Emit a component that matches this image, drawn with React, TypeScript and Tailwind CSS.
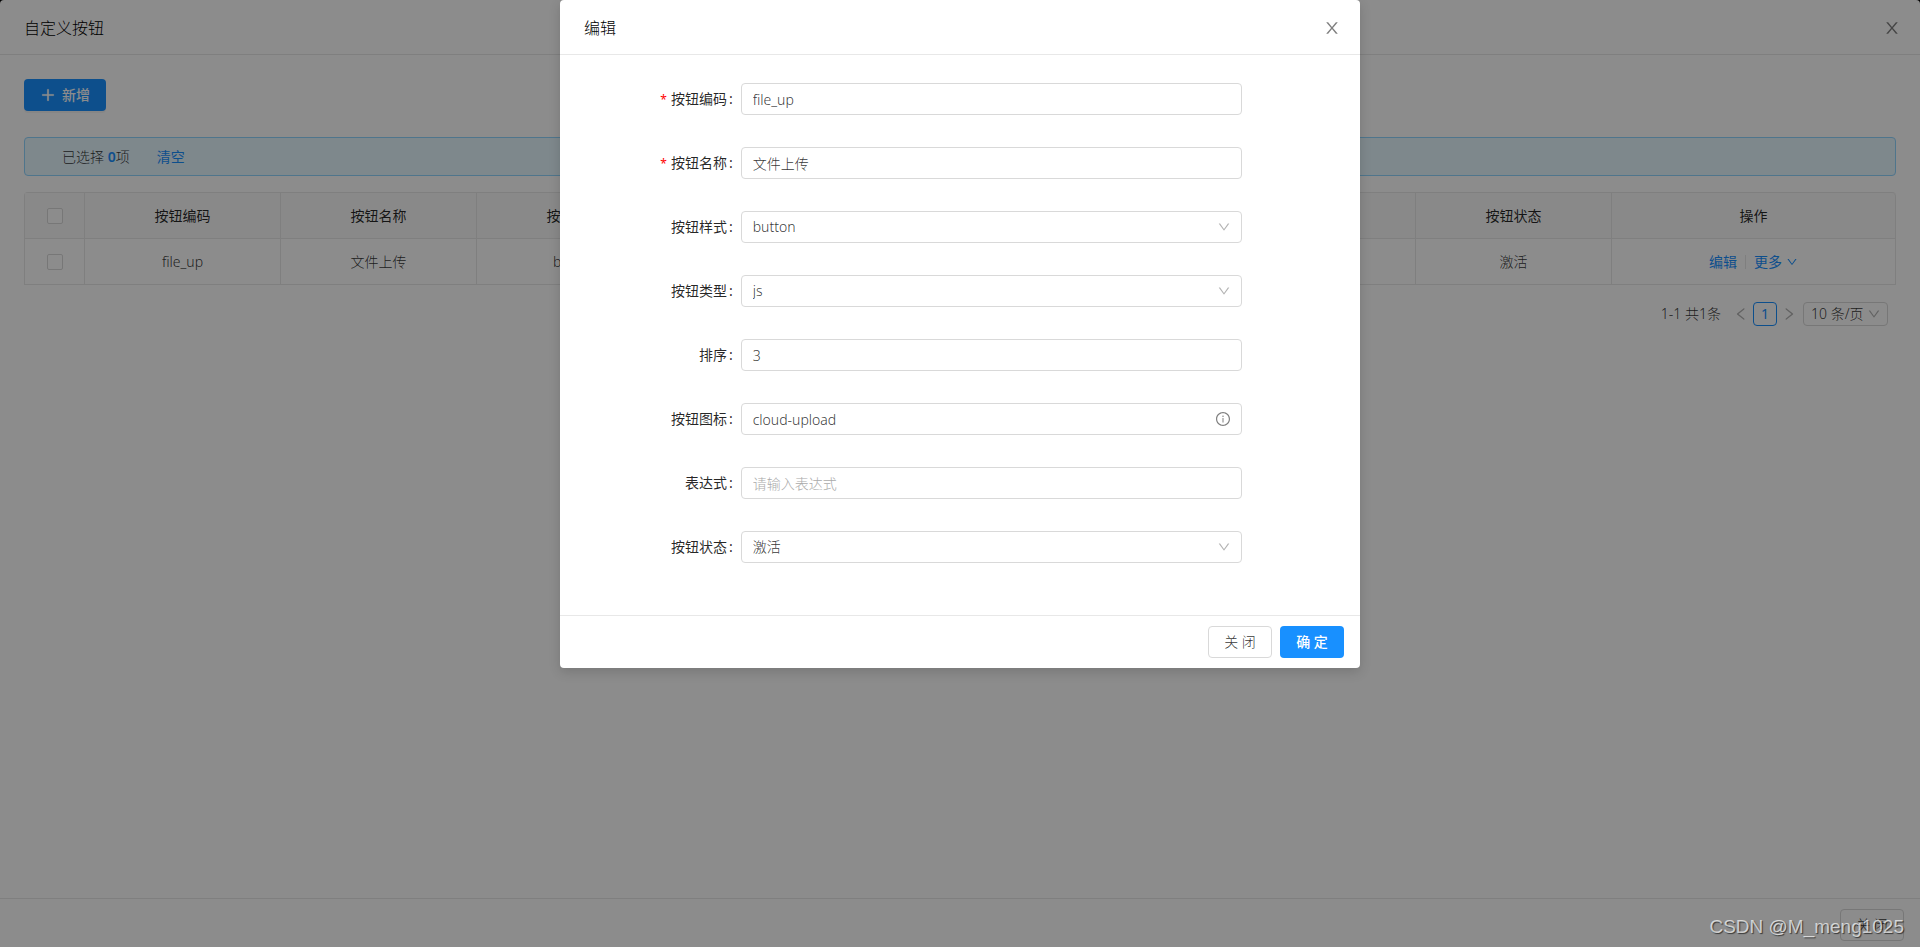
import { AiOutlineDown, AiOutlineInfoCircle, AiOutlineLeft, AiOutlinePlus, AiOutlineRight } from "react-icons/ai";

interface Field {
  id: string;
  label: string;
  kind: "input" | "select";
  value?: string;
  placeholder?: string;
  required?: boolean;
  info?: boolean;
}

const FIELDS: Field[] = [
  { id: "code", label: "按钮编码", kind: "input", value: "file_up", required: true },
  { id: "name", label: "按钮名称", kind: "input", value: "文件上传", required: true },
  { id: "style", label: "按钮样式", kind: "select", value: "button" },
  { id: "type", label: "按钮类型", kind: "select", value: "js" },
  { id: "order", label: "排序", kind: "input", value: "3" },
  { id: "icon", label: "按钮图标", kind: "input", value: "cloud-upload", info: true },
  { id: "exp", label: "表达式", kind: "input", placeholder: "请输入表达式" },
  { id: "status", label: "按钮状态", kind: "select", value: "激活" },
];

const COLUMNS = [
  { title: "按钮编码", value: "file_up", width: "w-[196px]" },
  { title: "按钮名称", value: "文件上传", width: "w-[196px]" },
  { title: "按钮样式", value: "button", width: "w-[196px]" },
  { title: "按钮类型", value: "js", width: "w-[196px]" },
  { title: "排序", value: "3", width: "" },
  { title: "按钮图标", value: "cloud-upload", width: "w-[196px]" },
  { title: "表达式", value: "", width: "w-[196px]" },
  { title: "按钮状态", value: "激活", width: "w-[196px]" },
];

const CONTROL = "block h-8 w-full rounded border border-[#d9d9d9] bg-white px-[11px] text-black/80 outline-none placeholder:text-[#aaaaaa]";

function CloseIcon() {
  return (
    <svg viewBox="64 64 896 896" className="size-4" fill="currentColor" aria-hidden="true">
      <path d="M563.8 512l262.5-312.9c4.4-5.2.7-13.1-6.1-13.1h-79.8c-4.7 0-9.2 2.1-12.3 5.7L511.6 449.8 295.1 191.7c-3-3.6-7.5-5.7-12.3-5.7H203c-6.8 0-10.5 7.9-6.1 13.1L459.4 512 196.9 824.9A7.95 7.95 0 0 0 203 838h79.8c4.7 0 9.2-2.1 12.3-5.7l216.5-258.1 216.5 258.1c3 3.6 7.5 5.7 12.3 5.7h79.8c6.8 0 10.5-7.9 6.1-13.1L563.8 512z" />
    </svg>
  );
}

function Checkbox({ label }: { label: string }) {
  return (
    <input
      type="checkbox"
      aria-label={label}
      className="block size-4 mx-auto appearance-none rounded-xs border border-[#d9d9d9] bg-white"
    />
  );
}

function Header({ title }: { title: string }) {
  return (
    <div className="flex items-center justify-between h-[55px] pt-px pl-6 pr-5 border-b border-[#e8e8e8]">
      <h2 className="text-base leading-[22px] text-black">{title}</h2>
      <button aria-label="关闭" className="text-black/50"><CloseIcon /></button>
    </div>
  );
}

function FormRow({ field }: { field: Field }) {
  return (
    <div className="grid grid-cols-[5fr_16fr_3fr] items-center h-10 mb-6">
      <label htmlFor={field.id} className="pr-2 text-right font-normal text-black/85">
        {field.required && <span className="mr-1 text-xs text-[#ff0000]">*</span>}
        {field.label}<span className="ml-0.5">:</span>
      </label>
      <div className="relative">
        {field.kind === "select" ? (
          <>
            <select id={field.id} className={`${CONTROL} appearance-none`}>
              <option>{field.value}</option>
            </select>
            <AiOutlineDown className="absolute right-[11px] top-[9px] size-3.5 text-black/30 pointer-events-none" />
          </>
        ) : (
          <input id={field.id} defaultValue={field.value} placeholder={field.placeholder} className={CONTROL} />
        )}
        {field.info && <AiOutlineInfoCircle className="absolute right-[11px] top-2 size-4 text-black/50" />}
      </div>
    </div>
  );
}

function ButtonTable() {
  return (
    <table className="w-full table-fixed border-separate border-spacing-0 rounded-t border-l border-t border-[#e8e8e8] text-center">
      <thead className="bg-[#fafafa] text-black/85">
        <tr className="h-[46px]">
          <th className="w-[60px] border-r border-b border-[#e8e8e8]"><Checkbox label="全选" /></th>
          {COLUMNS.map((c) => (
            <th key={c.title} className={`${c.width} border-r border-b border-[#e8e8e8] font-normal`}>{c.title}</th>
          ))}
          <th className="w-[284px] rounded-tr border-r border-b border-[#e8e8e8] font-normal">操作</th>
        </tr>
      </thead>
      <tbody>
        <tr className="h-[46px]">
          <td className="border-r border-b border-[#e8e8e8]"><Checkbox label="选择 file_up" /></td>
          {COLUMNS.map((c) => (
            <td key={c.title} className="border-r border-b border-[#e8e8e8]">{c.value}</td>
          ))}
          <td className="border-r border-b border-[#e8e8e8]">
            <div className="flex items-center justify-center font-normal text-[#1890ff]">
              <a href="#edit">编辑</a>
              <span className="mx-2 h-3.5 w-px bg-[#e8e8e8]" />
              <a href="#more" className="flex items-center gap-1">更多 <AiOutlineDown className="size-3" /></a>
            </div>
          </td>
        </tr>
      </tbody>
    </table>
  );
}

function Pagination() {
  return (
    <div className="flex items-center justify-end h-6 mt-[17px] pr-2">
      <span className="mr-3">1-1 共1条</span>
      <button aria-label="上一页" className="mr-1 text-black/30"><AiOutlineLeft className="size-4" /></button>
      <button className="size-6 rounded border border-[#1890ff] font-normal text-[#1890ff]">1</button>
      <button aria-label="下一页" className="ml-1 mr-1.5 text-black/30"><AiOutlineRight className="size-4" /></button>
      <div className="relative">
        <select aria-label="每页条数" className="block h-6 w-[85px] appearance-none rounded border border-[#d9d9d9] bg-white pl-[7px]">
          <option>10 条/页</option>
        </select>
        <AiOutlineDown className="absolute right-[7px] top-[5px] size-3.5 text-black/30 pointer-events-none" />
      </div>
    </div>
  );
}

function EditModal() {
  return (
    <div role="dialog" aria-label="编辑" className="w-[800px] rounded bg-white shadow-[0_4px_12px_rgba(0,0,0,0.15)]">
      <Header title="编辑" />
      <form className="p-6">
        {FIELDS.map((f) => <FormRow key={f.id} field={f} />)}
      </form>
      <div className="flex justify-end gap-2 border-t border-[#e8e8e8] px-4 py-2.5">
        <button className="h-8 w-16 rounded border border-[#d9d9d9] bg-white">关 闭</button>
        <button className="h-8 w-16 rounded bg-[#1890ff] font-medium text-white">确 定</button>
      </div>
    </div>
  );
}

export default function App() {
  return (
    <div className="relative min-h-screen bg-black font-['Noto_Sans','Noto_Sans_CJK_SC',sans-serif] text-sm font-light text-black/80">
      <div className="flex min-h-screen flex-col rounded-t bg-white">
        <Header title="自定义按钮" />
        <main className="flex-1 p-6">
          <button className="flex h-8 w-[82px] items-center justify-center gap-1.5 rounded bg-[#1890ff] font-medium text-white shadow-[0_2px_0_rgba(0,0,0,0.045)]">
            <AiOutlinePlus className="size-4 stroke-[40]" />新增
          </button>
          <div className="flex items-center h-[39px] mt-[26px] mb-4 rounded border border-[#91d5ff] bg-[#e6f7ff] pl-[37px]">
            <span>已选择 <b className="font-semibold text-[#1890ff]">0</b>项</span>
            <a href="#clear" className="ml-[27px] font-normal text-[#1890ff]">清空</a>
          </div>
          <ButtonTable />
          <Pagination />
        </main>
        <div className="flex justify-end border-t border-[#e8e8e8] px-4 pt-2.5 pb-1.5">
          <button className="h-8 w-16 rounded border border-[#d9d9d9] bg-white">关 闭</button>
        </div>
      </div>
      <div className="absolute inset-0 flex items-start justify-center bg-black/45">
        <EditModal />
      </div>
      <span className="absolute right-4 bottom-2 font-['Liberation_Sans',sans-serif] text-[19px] font-normal leading-6 text-white/70 [text-shadow:1px_1px_1px_rgba(0,0,0,0.6)]">
        CSDN @M_meng1025
      </span>
    </div>
  );
}
